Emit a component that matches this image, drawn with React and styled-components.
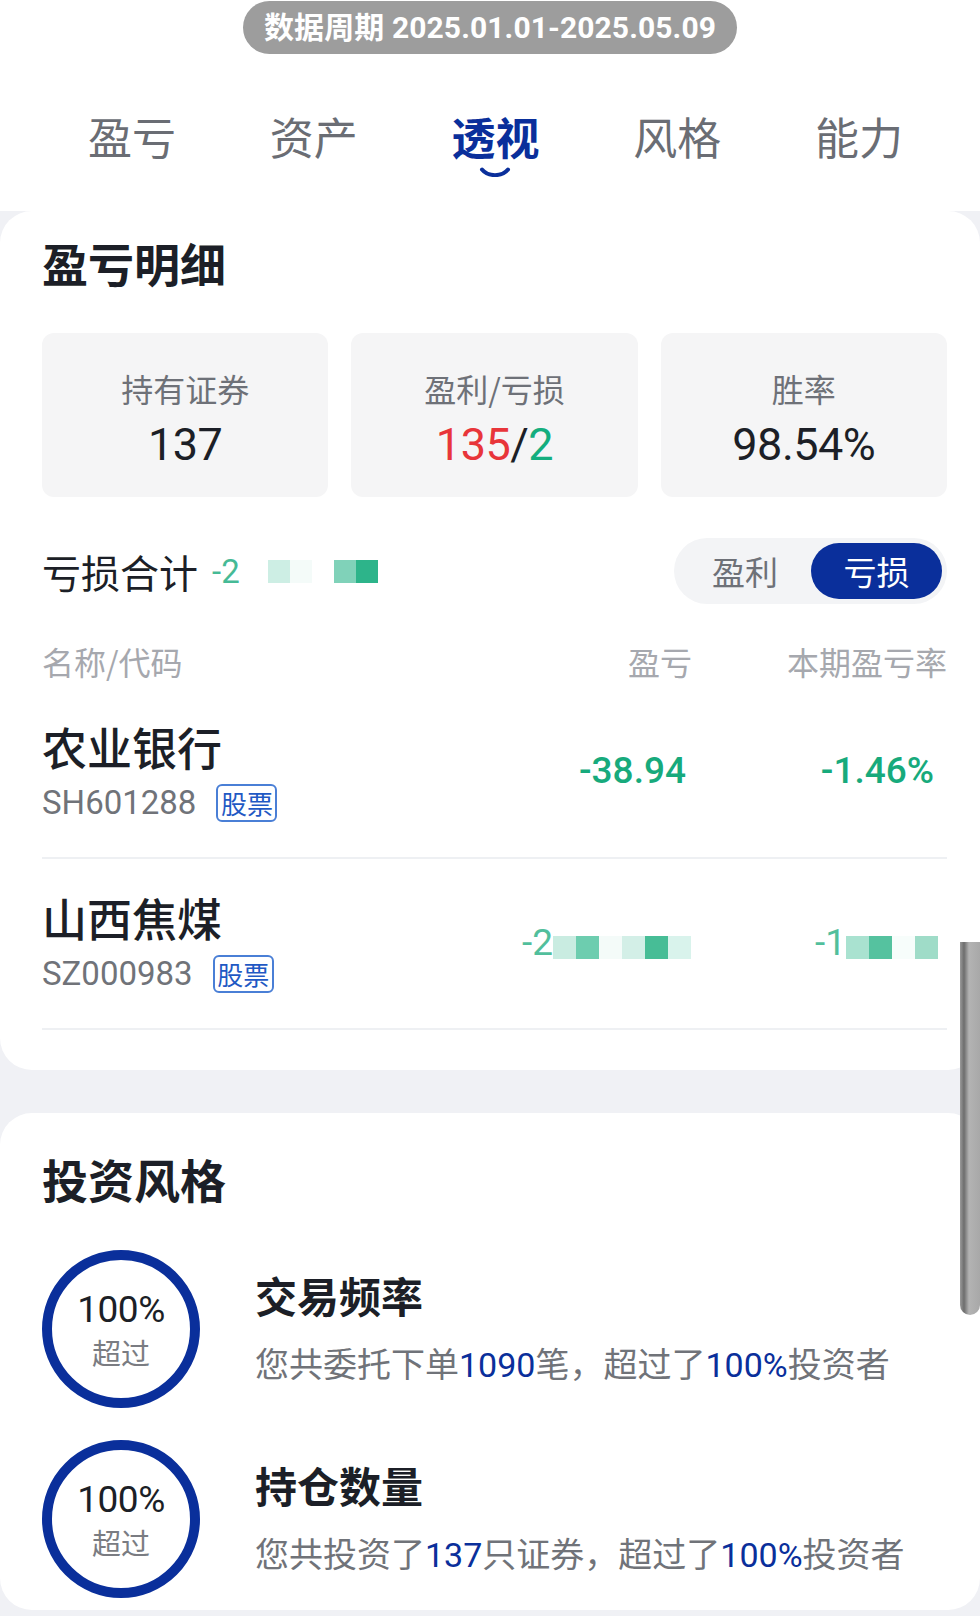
import styled, { createGlobalStyle } from "styled-components";

const GlobalStyle = createGlobalStyle`
  html, body {
    margin: 0;
    padding: 0;
    background: #f0f1f5;
  }
  body {
    font-family: "Noto Sans CJK SC", "Noto Sans", sans-serif;
  }
  * {
    box-sizing: border-box;
  }
`;

const BLUE = "#0a2f9b";
const GREEN = "#17aa7c";
const NUM = `Roboto, "Noto Sans CJK SC", sans-serif`;

const Page = styled.div`
  position: relative;
  width: 980px;
  height: 1616px;
  overflow: hidden;
  background: linear-gradient(#fcfcfd 0, #fcfcfd 80px, #f0f1f5 80px);
`;

const Header = styled.header`
  background: #ffffff;
  padding-bottom: 34px;
  display: flex;
  flex-direction: column;
  align-items: center;
`;

const PeriodPill = styled.div`
  margin-top: 1px;
  height: 53px;
  padding: 0 21px;
  border-radius: 27px;
  background: #9d9d9d;
  color: #ffffff;
  font: 700 30px/53px ${NUM};
  letter-spacing: 0.1px;
  white-space: nowrap;
`;

const TabList = styled.nav`
  align-self: stretch;
  margin-top: 60px;
  padding: 0 30px 0 41px;
  display: grid;
  grid-template-columns: repeat(5, 1fr);
`;

const Tab = styled.div`
  display: flex;
  flex-direction: column;
  align-items: center;
  font-size: 44px;
  line-height: 44px;
  font-weight: ${(p) => (p.$active ? 700 : 400)};
  color: ${(p) => (p.$active ? BLUE : "#6a6d74")};
`;

const Smile = styled.svg`
  margin-top: 9px;
  width: 32px;
  height: 10px;
  visibility: ${(p) => (p.$show ? "visible" : "hidden")};
`;

const Card = styled.section`
  background: #ffffff;
  border-radius: 32px;
  padding: ${(p) => p.$pad};
  margin-top: ${(p) => p.$top || 0}px;
`;

const CardTitle = styled.h2`
  margin: 0;
  font-size: 46px;
  line-height: 56px;
  font-weight: 700;
  color: #1c1f27;
`;

const StatGrid = styled.div`
  margin-top: 43px;
  display: grid;
  grid-template-columns: repeat(3, 1fr);
  gap: 23px;
`;

const StatBox = styled.div`
  height: 164px;
  border-radius: 12px;
  background: #f5f5f6;
  padding-top: 37px;
  display: flex;
  flex-direction: column;
  align-items: center;
`;

const StatLabel = styled.div`
  font-size: 32px;
  line-height: 36px;
  color: #6e7178;
`;

const StatValue = styled.div`
  margin-top: 14px;
  font: 400 45px/50px ${NUM};
  letter-spacing: -0.5px;
  color: #1c1f27;
`;

const Tone = styled.span`
  color: ${(p) => p.$c};
`;

const SummaryRow = styled.div`
  margin-top: 41px;
  height: 66px;
  display: flex;
  align-items: center;
  justify-content: space-between;
`;

const SummaryLabel = styled.div`
  display: flex;
  align-items: center;
  font-size: 39px;
  color: #1c1f27;
`;

const Masked = styled.span`
  display: inline-flex;
  align-items: center;
  margin-left: ${(p) => p.$ml || 0}px;
  font: 400 ${(p) => p.$size || 34}px / 1 ${NUM};
  color: ${GREEN};
`;

const Pixel = styled.i`
  display: inline-block;
  width: ${(p) => p.$w || 22}px;
  height: 23px;
  background: ${(p) => p.$c};
  margin-top: ${(p) => p.$dy || 0}px;
`;

const Toggle = styled.div`
  width: 273px;
  height: 66px;
  padding: 5px;
  border-radius: 33px;
  background: #f3f4f6;
  display: flex;
`;

const ToggleItem = styled.div`
  flex: ${(p) => (p.$active ? "0 0 131px" : "1")};
  border-radius: 28px;
  background: ${(p) => (p.$active ? BLUE : "transparent")};
  color: ${(p) => (p.$active ? "#ffffff" : "#6e7178")};
  font-size: 33px;
  line-height: 56px;
  text-align: center;
`;

const TableGrid = styled.div`
  display: grid;
  grid-template-columns: 1fr 160px 255px;
  align-items: center;
`;

const TableHead = styled(TableGrid)`
  margin-top: 37px;
  margin-bottom: 7px;
  font-size: 32px;
  line-height: 40px;
  color: #a6a8ae;
`;

const HeadCell = styled.div`
  text-align: ${(p) => (p.$right ? "right" : "left")};
`;

const StockRow = styled(TableGrid)`
  padding: 31px 0 34px;
  border-bottom: 2px solid #eef0f3;
`;

const StockName = styled.div`
  font-size: 45px;
  line-height: 56px;
  font-weight: 500;
  color: #1c1f27;
`;

const CodeLine = styled.div`
  margin-top: 8px;
  height: 40px;
  display: flex;
  align-items: center;
  gap: 20px;
`;

const Code = styled.span`
  font: 400 33px/40px ${NUM};
  color: #707379;
`;

const Tag = styled.span`
  width: 61px;
  height: 38px;
  border: 2px solid #4a7fd6;
  border-radius: 6px;
  color: #1f59c4;
  font-size: 26px;
  line-height: 34px;
  text-align: center;
`;

const Value = styled.div`
  justify-self: end;
  padding-right: ${(p) => p.$pr || 0}px;
  font: 500 37px/44px ${NUM};
  color: ${GREEN};
  display: flex;
  align-items: center;
`;

const StyleRows = styled.div`
  margin-top: 44px;
  display: flex;
  flex-direction: column;
  gap: 32px;
`;

const StyleRow = styled.div`
  display: flex;
  align-items: center;
  gap: 55px;
`;

const Ring = styled.div`
  flex: 0 0 158px;
  height: 158px;
  border-radius: 50%;
  border: 10px solid ${BLUE};
  display: flex;
  flex-direction: column;
  align-items: center;
  justify-content: center;
  gap: 7px;
`;

const RingValue = styled.div`
  font: 400 37px/38px ${NUM};
  color: #1c1f27;
  letter-spacing: -0.5px;
`;

const RingLabel = styled.div`
  font-size: 29px;
  line-height: 32px;
  color: #7a7c82;
`;

const StyleText = styled.div`
  display: flex;
  flex-direction: column;
  gap: 22px;
`;

const StyleTitle = styled.div`
  font-size: 42px;
  line-height: 48px;
  font-weight: 700;
  color: #1c1f27;
`;

const StyleDesc = styled.div`
  font-size: 34px;
  line-height: 44px;
  color: #707379;
  white-space: nowrap;
`;

const Em = styled.span`
  font-family: ${NUM};
  font-weight: 400;
  color: ${BLUE};
`;

const ScrollThumb = styled.div`
  position: absolute;
  left: 960px;
  top: 942px;
  width: 20px;
  height: 373px;
  border-radius: 0 0 10px 10px;
  background: linear-gradient(90deg, #9a9a9a 0, #6d6d6d 20%, #b3b3b3 45%, #a8a8a8 100%);
`;

const tabs = ["盈亏", "资产", "透视", "风格", "能力"];

const mask1 = ["#c9ece1", "#6dcdaf", "#f4fbf9", "#d3efe7", "#47bd96", "#d9f3ec"];
const mask2 = ["#a9e2d0", "#55c29f", "#f7fdfb", "#9fdcc8"];

function Mosaic({ lead, blocks }) {
  return (
    <Masked $size={37}>
      <span style={{ opacity: 0.75 }}>{lead}</span>
      {blocks.map((c, i) => (
        <Pixel key={i} $c={c} $w={23} $dy={10} />
      ))}
    </Masked>
  );
}

export default function App() {
  return (
    <Page>
      <GlobalStyle />
      <Header>
        <PeriodPill>数据周期 2025.01.01-2025.05.09</PeriodPill>
        <TabList>
          {tabs.map((t) => (
            <Tab key={t} $active={t === "透视"}>
              {t}
              <Smile viewBox="0 0 32 10" $show={t === "透视"}>
                <path
                  d="M3 2.5 C 9 10, 23 10, 29 2.5"
                  fill="none"
                  stroke={BLUE}
                  strokeWidth="4"
                  strokeLinecap="round"
                />
              </Smile>
            </Tab>
          ))}
        </TabList>
      </Header>

      <Card $pad="23px 33px 40px 42px">
        <CardTitle>盈亏明细</CardTitle>
        <StatGrid>
          <StatBox>
            <StatLabel>持有证券</StatLabel>
            <StatValue>137</StatValue>
          </StatBox>
          <StatBox>
            <StatLabel>盈利/亏损</StatLabel>
            <StatValue>
              <Tone $c="#e8353a">135</Tone>/<Tone $c="#14ae7e">2</Tone>
            </StatValue>
          </StatBox>
          <StatBox>
            <StatLabel>胜率</StatLabel>
            <StatValue>98.54%</StatValue>
          </StatBox>
        </StatGrid>

        <SummaryRow>
          <SummaryLabel>
            亏损合计
            <Masked $ml={14} $size={33}>
              <span style={{ opacity: 0.8 }}>-2</span>
              <Pixel $c="#cdeee4" style={{ marginLeft: 28 }} />
              <Pixel $c="#f4fbf9" />
              <Pixel $c="#ffffff" />
              <Pixel $c="#80d2b9" />
              <Pixel $c="#2db48a" />
            </Masked>
          </SummaryLabel>
          <Toggle>
            <ToggleItem>盈利</ToggleItem>
            <ToggleItem $active>亏损</ToggleItem>
          </Toggle>
        </SummaryRow>

        <TableHead>
          <HeadCell>名称/代码</HeadCell>
          <HeadCell $right>盈亏</HeadCell>
          <HeadCell $right>本期盈亏率</HeadCell>
        </TableHead>

        <StockRow>
          <div>
            <StockName>农业银行</StockName>
            <CodeLine>
              <Code>SH601288</Code>
              <Tag>股票</Tag>
            </CodeLine>
          </div>
          <Value $pr={6}>-38.94</Value>
          <Value $pr={13}>-1.46%</Value>
        </StockRow>

        <StockRow>
          <div>
            <StockName>山西焦煤</StockName>
            <CodeLine>
              <Code>SZ000983</Code>
              <Tag>股票</Tag>
            </CodeLine>
          </div>
          <Value $pr={1}>
            <Mosaic lead="-2" blocks={mask1} />
          </Value>
          <Value $pr={9}>
            <Mosaic lead="-1" blocks={mask2} />
          </Value>
        </StockRow>
      </Card>

      <Card $pad="37px 33px 12px 42px" $top={43}>
        <CardTitle>投资风格</CardTitle>
        <StyleRows>
          <StyleRow>
            <Ring>
              <RingValue>100%</RingValue>
              <RingLabel>超过</RingLabel>
            </Ring>
            <StyleText>
              <StyleTitle>交易频率</StyleTitle>
              <StyleDesc>
                您共委托下单<Em>1090</Em>笔，超过了<Em>100%</Em>投资者
              </StyleDesc>
            </StyleText>
          </StyleRow>
          <StyleRow>
            <Ring>
              <RingValue>100%</RingValue>
              <RingLabel>超过</RingLabel>
            </Ring>
            <StyleText>
              <StyleTitle>持仓数量</StyleTitle>
              <StyleDesc>
                您共投资了<Em>137</Em>只证券，超过了<Em>100%</Em>投资者
              </StyleDesc>
            </StyleText>
          </StyleRow>
        </StyleRows>
      </Card>

      <ScrollThumb />
    </Page>
  );
}
